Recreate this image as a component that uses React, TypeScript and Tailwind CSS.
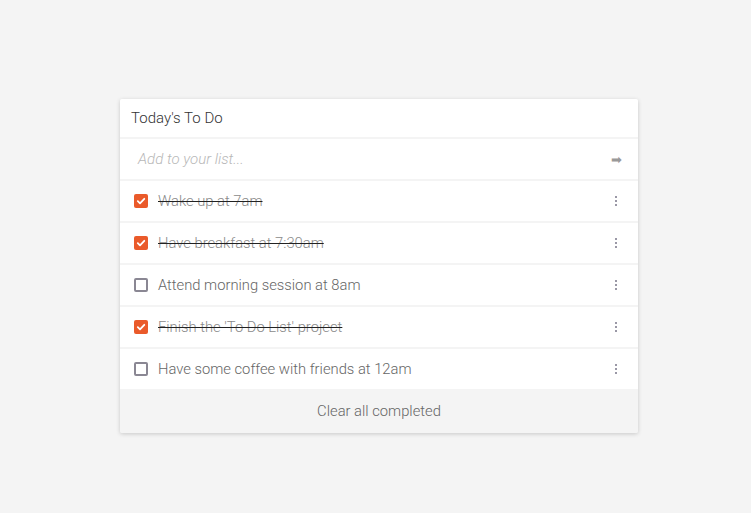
const items = [
  { text: "Wake up at 7am", done: true },
  { text: "Have breakfast at 7:30am", done: true },
  { text: "Attend morning session at 8am", done: false },
  { text: "Finish the 'To Do List' project", done: true },
  { text: "Have some coffee with friends at 12am", done: false },
];

function Check({ done }: { done: boolean }) {
  if (!done) {
    return (
      <span className="w-[14px] h-[14px] rounded-[2px] border-2 border-[#8a8793] bg-white shrink-0" />
    );
  }
  return (
    <span className="w-[14px] h-[14px] rounded-[2px] bg-[#ea5a2a] flex items-center justify-center shrink-0">
      <svg width="10" height="10" viewBox="0 0 10 10">
        <path
          d="M1.8 5.2 L4 7.3 L8.3 2.8"
          fill="none"
          stroke="#fff"
          strokeWidth="1.8"
          strokeLinecap="round"
          strokeLinejoin="round"
        />
      </svg>
    </span>
  );
}

function Kebab() {
  return (
    <span className="flex flex-col gap-[2px] w-[2px]">
      <span className="w-[2px] h-[2px] bg-[#9a98a6]" />
      <span className="w-[2px] h-[2px] bg-[#9a98a6]" />
      <span className="w-[2px] h-[2px] bg-[#9a98a6]" />
    </span>
  );
}

export default function App() {
  return (
    <div
      className="min-h-[513px] bg-[#f4f4f4] pt-[99px] pl-[120px]"
      style={{ fontFamily: "Roboto, 'Liberation Sans', sans-serif" }}
    >
      <div className="w-[518px] bg-[#f4f4f4] rounded-[2px] shadow-[0_1px_4px_rgba(0,0,0,0.18)] flex flex-col gap-[2px] overflow-hidden">
        {/* Header */}
        <div className="h-[38px] bg-white flex items-center px-[11px]">
          <span className="text-[15px] font-light text-[#333]">
            Today's To Do
          </span>
        </div>

        {/* Input */}
        <div className="h-[40px] bg-white flex items-center pl-[18px] pr-[16px]">
          <span className="flex-1 text-[15px] font-light italic text-[#b8b8b8]">
            Add to your list...
          </span>
          <span className="text-[13px] text-[#999] leading-none">➡</span>
        </div>

        {/* Items */}
        {items.map((item) => (
          <div
            key={item.text}
            className="h-[40px] bg-white flex items-center pl-[14px] pr-[21px] gap-[10px]"
          >
            <Check done={item.done} />
            <span
              className={
                item.done
                  ? "flex-1 pt-[1px] text-[14.75px] font-light text-[#8a8a8a] line-through decoration-[#222]"
                  : "flex-1 pt-[1px] text-[14.75px] font-light text-[#666]"
              }
            >
              {item.text}
            </span>
            <Kebab />
          </div>
        ))}

        {/* Footer */}
        <div className="h-[44px] -mt-[2px] bg-[#f4f4f4] flex items-center justify-center">
          <span className="pt-[1px] text-[14.75px] font-light text-[#666]">
            Clear all completed
          </span>
        </div>
      </div>
    </div>
  );
}
